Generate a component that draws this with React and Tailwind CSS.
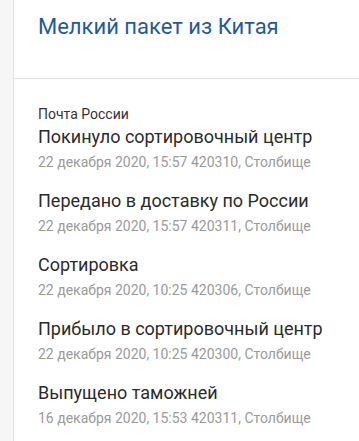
const events = [
  { title: 'Покинуло сортировочный центр', date: '22 декабря 2020, 15:57', place: '420310, Столбище' },
  { title: 'Передано в доставку по России', date: '22 декабря 2020, 15:57', place: '420311, Столбище' },
  { title: 'Сортировка', date: '22 декабря 2020, 10:25', place: '420306, Столбище' },
  { title: 'Прибыло в сортировочный центр', date: '22 декабря 2020, 10:25', place: '420300, Столбище' },
  { title: 'Выпущено таможней', date: '16 декабря 2020, 15:53', place: '420311, Столбище' },
]

export default function App() {
  return (
    <div className="flex h-[441px] w-[359px] overflow-hidden bg-[#f6f6f6] font-['Roboto',sans-serif]">
      <div className="w-[13px] shrink-0" />
      <div className="flex-1 border-l border-[#e3e3e3] bg-white">
        <div className="h-[79px] border-b border-[#e3e3e3] pl-[24px] pt-[13px]">
          <h1 className="text-[22px] leading-[28px] text-[#1f5b98]">Мелкий пакет из Китая</h1>
        </div>
        <div className="pl-[24px] pt-[25px]">
          <div className="text-[14px] leading-[20px] text-[#333]">Почта России</div>
          <div className="flex flex-col gap-[14px]">
            {events.map((e, i) => (
              <div key={i}>
                <div className="text-[18px] leading-[26px] text-[#2b2b2b]">{e.title}</div>
                <div className="text-[14px] leading-[24px] text-[#9a9a9a]">
                  {e.date} {e.place}
                </div>
              </div>
            ))}
          </div>
        </div>
      </div>
    </div>
  )
}
